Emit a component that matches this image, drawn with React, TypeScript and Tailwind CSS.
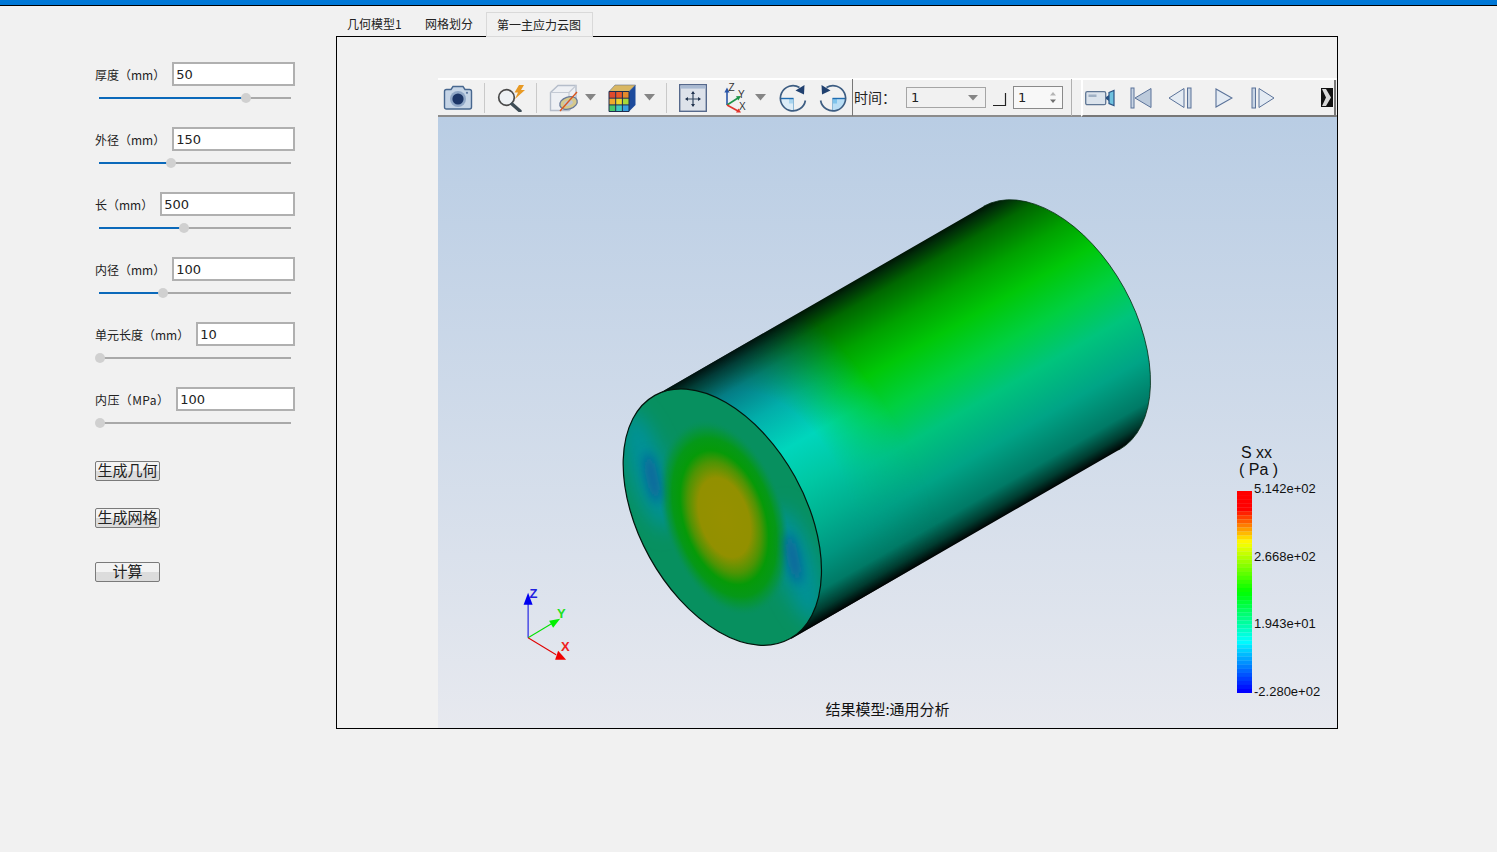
import React from "react";

const fields = [
  { label: "厚度（mm）", value: "50", pos: 147, tracking: "" },
  { label: "外径（mm）", value: "150", pos: 72, tracking: "" },
  { label: "长（mm）", value: "500", pos: 85, tracking: "" },
  { label: "内径（mm）", value: "100", pos: 63.5, tracking: "" },
  { label: "单元长度（mm）", value: "10", pos: 1, tracking: "" },
  { label: "内压（MPa）", value: "100", pos: 1, tracking: "tracking-[0.4px]" },
];

function Field({ label, value, pos, tracking }: { label: string; value: string; pos: number; tracking: string }) {
  return (
    <div className="h-[65px]">
      <div className="flex items-center h-6">
        <span className={"text-[12px] text-[#222] whitespace-nowrap pt-[1px] " + tracking}>{label}</span>
        <div className="flex items-center h-6 border-2 border-[#b0b0b0] bg-white pl-[2px] text-[13px] font-['DejaVu_Sans',sans-serif] text-[#222] leading-none ml-[7px] flex-1 min-w-0">
          {value}
        </div>
      </div>
      <div className="relative h-[2px] mt-[11px] ml-1 mr-1 bg-[#a9a9a9]">
        <div className="h-full bg-[#0b69ba]" style={{ width: pos }} />
        <div
          className="absolute top-[-4px] w-[10px] h-[10px] rounded-full bg-[#d0d0d0] -translate-x-1/2"
          style={{ left: pos }}
        />
      </div>
    </div>
  );
}

function Btn({ children, className }: { children: React.ReactNode; className: string }) {
  return (
    <div
      className={
        "w-[65px] h-5 border border-[#7a7a7a] rounded-[2px] flex items-center justify-center pb-[3px] text-[15px] leading-none text-[#222] bg-linear-to-b from-[#f3f3f3] from-50% to-[#dcdcdc] to-50% " +
        className
      }
    >
      {children}
    </div>
  );
}

const Sep = ({ className }: { className: string }) => <div className={"w-px h-[30px] bg-[#c9c9c9] shrink-0 " + className} />;

const Caret = ({ className }: { className: string }) => (
  <svg width="11" height="7" viewBox="0 0 11 7" className={"shrink-0 " + className}>
    <path d="M0 0H11L5.5 6.5Z" fill="#858585" />
  </svg>
);

const IconCamera = () => (
  <svg width="30" height="26" viewBox="0 0 30 26" className="shrink-0">
    <path d="M1.5 6.5Q1.5 4.5 3.5 4.5H8L10 1.5H20L22 4.5H26.5Q28.5 4.5 28.5 6.5V22Q28.5 24 26.5 24H3.5Q1.5 24 1.5 22Z" fill="#c5d4e6" stroke="#47678f" strokeWidth="1.4" />
    <circle cx="15" cy="14" r="8" fill="#8fa6c6" />
    <circle cx="15" cy="14" r="5.6" fill="#1c3567" />
    <circle cx="24" cy="7.8" r="1.1" fill="#5b77a0" />
  </svg>
);

const IconZap = () => (
  <svg width="30" height="28" viewBox="0 0 30 28" className="shrink-0">
    <circle cx="10.5" cy="13.5" r="7.8" fill="#eef2f5" stroke="#4a4a4a" strokeWidth="1.7" />
    <path d="M16 20L24 27" stroke="#3d4c55" strokeWidth="3.4" strokeLinecap="round" />
    <path d="M23 1L28 1L25 6L29 6L19 15L22 8.5L18.5 8.5Z" fill="#e89a25" />
  </svg>
);

const IconCube = () => (
  <svg width="30" height="30" viewBox="0 0 30 30" className="shrink-0">
    <path d="M1.5 9.5L9 2.5H27V20L20 27.5H1.5Z" fill="#eef0f4" stroke="#b5bdca" strokeWidth="1.4" />
    <path d="M1.5 9.5H20V27.5M20 9.5L27 2.5" fill="none" stroke="#c4cad4" strokeWidth="1.2" />
    <ellipse cx="19.5" cy="20" rx="9" ry="6" fill="#d6c98c" stroke="#66789a" strokeWidth="1.3" transform="rotate(-18 19.5 20)" />
    <ellipse cx="19.5" cy="20" rx="4.5" ry="2.6" fill="#bfc6d2" transform="rotate(-18 19.5 20)" />
    <path d="M11 28L28 9" stroke="#d9561f" strokeWidth="1.4" />
  </svg>
);

const IconColorCube = () => (
  <svg width="29" height="28" viewBox="0 0 29 28" className="shrink-0">
    <path d="M7 1H27.5L21 7.5H1Z" fill="#d9b763" stroke="#64748b" strokeWidth=".6" />
    <path d="M21 7.5L27.5 1V21L21 27.5Z" fill="#1d4b9c" />
    <rect x="1" y="7.5" width="6.7" height="6.7" fill="#e14a2c" />
    <rect x="7.7" y="7.5" width="6.7" height="6.7" fill="#e9592a" />
    <rect x="14.4" y="7.5" width="6.6" height="6.7" fill="#e48a2c" />
    <rect x="1" y="14.2" width="6.7" height="6.7" fill="#f0a92c" />
    <rect x="7.7" y="14.2" width="6.7" height="6.7" fill="#ecd52c" />
    <rect x="14.4" y="14.2" width="6.6" height="6.7" fill="#a7d73a" />
    <rect x="1" y="20.9" width="6.7" height="6.6" fill="#49c86a" />
    <rect x="7.7" y="20.9" width="6.7" height="6.6" fill="#40c8c0" />
    <rect x="14.4" y="20.9" width="6.6" height="6.6" fill="#3a9ee0" />
    <path d="M1 7.5H21V27.5H1ZM7.7 7.5V27.5M14.4 7.5V27.5M1 14.2H21M1 20.9H21" fill="none" stroke="#1e2c4e" strokeWidth="1" />
  </svg>
);

const IconFit = () => (
  <svg width="28" height="28" viewBox="0 0 28 28" className="shrink-0">
    <rect x=".7" y=".7" width="26.6" height="26.6" fill="#dde2ea" stroke="#56698c" strokeWidth="1.4" />
    <rect x="1.4" y="1.4" width="25.2" height="3.2" fill="#a9bad2" />
    <path d="M14 8V22M7 15H21" stroke="#33465f" strokeWidth="1.2" />
    <path d="M14 7L16 10H12ZM14 23L16 20H12ZM6 15L9 13V17ZM22 15L19 13V17Z" fill="#22344f" />
  </svg>
);

const IconAxis = () => (
  <svg width="25" height="30" viewBox="0 0 25 30" className="shrink-0">
    <path d="M6 22V8" stroke="#2a55a8" strokeWidth="1.6" />
    <path d="M6 4.5L8.6 9.5H3.4Z" fill="#2a55a8" />
    <path d="M6 22L17 15" stroke="#1e9448" strokeWidth="1.6" />
    <path d="M20 13L15 13.2L17.4 17.4Z" fill="#1e9448" />
    <path d="M6 22L17 28" stroke="#e0342c" strokeWidth="1.6" />
    <path d="M20 29.5L15 29.6L17.5 25.4Z" fill="#e0342c" />
    <text x="7.5" y="8" fontSize="10" fill="#333" fontFamily="Liberation Sans">Z</text>
    <text x="17" y="15" fontSize="10" fill="#333" fontFamily="Liberation Sans">Y</text>
    <text x="18" y="27" fontSize="10" fill="#333" fontFamily="Liberation Sans">X</text>
  </svg>
);

const IconRotate = ({ flip }: { flip?: boolean }) => (
  <svg width="28" height="28" viewBox="0 0 28 28" className="shrink-0" style={flip ? { transform: "scaleX(-1)" } : undefined}>
    <path d="M1.5 14.5H14.5V26.5A12.6 12.6 0 0 1 1.5 14.5Z" fill={flip ? "#b9def5" : "#dcecf7"} />
    <rect x="10" y="14.5" width="4.5" height="5" fill={flip ? "#7fc4ec" : "#a9d4ee"} />
    <path d="M14.5 14.5V26.5" stroke="#8cb8d6" strokeWidth="1" />
    <path d="M1.5 14.5H14.5" stroke="#1f6cb0" strokeWidth="1.4" />
    <path d="M20.5 3.5A12.6 12.6 0 1 0 26.4 16.5" fill="none" stroke="#3d5d82" strokeWidth="1.7" />
    <path d="M25.5 1L25 10.5L16.5 6.5Z" fill="#20406f" />
  </svg>
);

const IconVideo = () => (
  <svg width="30" height="18" viewBox="0 0 30 18" className="shrink-0">
    <rect x=".7" y="2.7" width="20" height="13" rx="1.5" fill="#dbe3ec" stroke="#5f7694" strokeWidth="1.3" />
    <rect x="3.5" y="5.5" width="8" height="2.5" fill="#9fb0c4" />
    <path d="M21 8L24 6V12L21 10Z" fill="#274f80" />
    <path d="M24 3.5L29 1.5V16.5L24 14.5Z" fill="#6fc2df" stroke="#2c5486" strokeWidth="1.2" />
  </svg>
);

const Prev = () => (
  <svg width="22" height="22" viewBox="0 0 22 22" className="shrink-0">
    <rect x="1" y="1" width="3" height="20" fill="#c9d5e4" stroke="#5a7299" strokeWidth="1" />
    <path d="M21 1.5V20.5L5 11Z" fill="#bccadb" stroke="#5a7299" strokeWidth="1" />
  </svg>
);
const Back = () => (
  <svg width="24" height="22" viewBox="0 0 24 22" className="shrink-0">
    <path d="M16 1.5V20.5L1 11Z" fill="#e4ebf3" stroke="#5a7299" strokeWidth="1" />
    <rect x="19.5" y="1" width="3.5" height="20" fill="#c9d5e4" stroke="#5a7299" strokeWidth="1" />
  </svg>
);
const Play = () => (
  <svg width="18" height="22" viewBox="0 0 18 22" className="shrink-0">
    <path d="M1 2V20L17 11Z" fill="#e4ebf3" stroke="#5a7299" strokeWidth="1.1" />
  </svg>
);
const Forward = () => (
  <svg width="24" height="22" viewBox="0 0 24 22" className="shrink-0">
    <rect x="1" y="1" width="3.5" height="20" fill="#c9d5e4" stroke="#5a7299" strokeWidth="1" />
    <path d="M8 1.5V20.5L23 11Z" fill="#e4ebf3" stroke="#5a7299" strokeWidth="1" />
  </svg>
);

function bandColor(t: number) {
  const s = (a: number, b: number, k: number) => Math.round(a + (b - a) * k);
  if (t < 0.08) return "rgb(255,0,0)";
  if (t < 0.25) { const k = (t - 0.08) / 0.17; return `rgb(255,${s(0, 255, k)},0)`; }
  if (t < 0.5) { const k = (t - 0.25) / 0.25; return `rgb(${s(255, 0, k)},255,0)`; }
  if (t < 0.75) { const k = (t - 0.5) / 0.25; return `rgb(0,255,${s(0, 255, k)})`; }
  const k = (t - 0.75) / 0.25;
  return `rgb(0,${s(255, 0, k)},255)`;
}

const bands = Array.from({ length: 50 }, (_, i) => i);

function ColorBar() {
  return (
    <svg width="15" height="202" viewBox="0 0 15 202" className="shrink-0 mt-[10px]">
      {bands.map((i) => (
        <rect key={i} x="0" y={i * 4.04} width="15" height="4.2" fill={bandColor(i / 49)} />
      ))}
    </svg>
  );
}

const BODY = "M656 394.5L983 206A139 83 61 0 1 1118 449.5L791 638Z";

function Cylinder() {
  return (
    <svg className="absolute inset-0 w-full h-full" viewBox="438 117 898 610">
      <defs>
        <linearGradient id="backShade" gradientUnits="userSpaceOnUse" x1="656" y1="394.5" x2="795" y2="636">
          <stop offset="0" stopColor="#001505" />
          <stop offset=".02" stopColor="#002c08" />
          <stop offset=".08" stopColor="#006800" />
          <stop offset=".2" stopColor="#00a200" />
          <stop offset=".32" stopColor="#00c808" />
          <stop offset=".46" stopColor="#00d040" />
          <stop offset=".6" stopColor="#00c47c" />
          <stop offset=".76" stopColor="#00a486" />
          <stop offset=".9" stopColor="#007a66" />
          <stop offset=".96" stopColor="#003c30" />
          <stop offset="1" stopColor="#000" />
        </linearGradient>
        <linearGradient id="frontShade" gradientUnits="userSpaceOnUse" x1="656" y1="394.5" x2="795" y2="636">
          <stop offset="0" stopColor="#001015" />
          <stop offset=".04" stopColor="#023c46" />
          <stop offset=".12" stopColor="#047c86" />
          <stop offset=".25" stopColor="#02aeaa" />
          <stop offset=".4" stopColor="#00d6bc" />
          <stop offset=".54" stopColor="#00c8a4" />
          <stop offset=".68" stopColor="#00b090" />
          <stop offset=".8" stopColor="#009680" />
          <stop offset=".9" stopColor="#007a66" />
          <stop offset=".96" stopColor="#003c30" />
          <stop offset="1" stopColor="#000" />
        </linearGradient>
        <radialGradient id="frontMaskGrad" gradientUnits="userSpaceOnUse" cx="0" cy="0" r="1" gradientTransform="translate(780 490) rotate(-30) scale(135 240)">
          <stop offset="0" stopColor="#fff" />
          <stop offset=".45" stopColor="#fff" />
          <stop offset="1" stopColor="#000" />
        </radialGradient>
        <mask id="frontMask" maskUnits="userSpaceOnUse" x="438" y="117" width="898" height="610">
          <rect x="438" y="117" width="898" height="610" fill="url(#frontMaskGrad)" />
        </mask>
        <radialGradient id="core">
          <stop offset="0" stopColor="#969000" />
          <stop offset=".4" stopColor="#929000" />
          <stop offset=".56" stopColor="#4e9404" />
          <stop offset=".68" stopColor="#069a08" />
          <stop offset=".8" stopColor="#059818" />
          <stop offset=".9" stopColor="#06943f" stopOpacity=".8" />
          <stop offset="1" stopColor="#07905f" stopOpacity="0" />
        </radialGradient>
        <filter id="blur5" x="-100%" y="-100%" width="300%" height="300%"><feGaussianBlur stdDeviation="5.5" /></filter>
        <filter id="blur9" x="-100%" y="-100%" width="300%" height="300%"><feGaussianBlur stdDeviation="10" /></filter>
        <clipPath id="faceClip">
          <ellipse cx="722" cy="516.5" rx="139" ry="83" transform="rotate(61 722 516.5)" />
        </clipPath>
      </defs>

      <path d={BODY} fill="url(#backShade)" />
      <path d={BODY} fill="url(#frontShade)" mask="url(#frontMask)" />
      <path d="M983 206A139 83 61 0 1 1118 449.5" fill="none" stroke="#062b12" strokeWidth=".8" />

      <ellipse cx="722" cy="516.5" rx="139" ry="83" transform="rotate(61 722 516.5)" fill="#07905f" />
      <g clipPath="url(#faceClip)">
        <ellipse cx="648" cy="470" rx="18" ry="62" fill="#06929a" filter="url(#blur9)" transform="rotate(-18 648 470)" />
        <ellipse cx="797" cy="565" rx="18" ry="60" fill="#06929a" filter="url(#blur9)" transform="rotate(-18 797 565)" />
        <ellipse cx="724" cy="517" rx="102" ry="60" fill="url(#core)" transform="rotate(72 724 517)" />
        <ellipse cx="652" cy="477" rx="6" ry="26" fill="#08609f" filter="url(#blur5)" transform="rotate(-12 652 477)" />
        <ellipse cx="793" cy="558" rx="6" ry="26" fill="#08609f" filter="url(#blur5)" transform="rotate(-12 793 558)" />
      </g>
      <ellipse cx="722" cy="516.5" rx="139" ry="83" transform="rotate(61 722 516.5)" fill="none" stroke="#04140c" strokeWidth="1.2" />

      <g fontFamily="Liberation Sans" fontWeight="700" fontSize="13">
        <path d="M528 637V600" stroke="#0000e0" strokeWidth="1" />
        <path d="M528 592L532.5 604H523.5Z" fill="#0000f0" />
        <text x="529.5" y="597" fill="#2020e0">Z</text>
        <path d="M528 637L553 622" stroke="#00e000" strokeWidth="1" />
        <path d="M560 618L553 627L549 620Z" fill="#00f000" />
        <text x="557" y="617" fill="#20e020">Y</text>
        <path d="M528 637L556 654" stroke="#e00000" strokeWidth="1" />
        <path d="M566 659L555 659L558 650Z" fill="#f00000" />
        <text x="561" y="650" fill="#f02020">X</text>
      </g>
    </svg>
  );
}

export default function App() {
  return (
    <div className="w-[1497px] h-[852px] overflow-hidden bg-[#f1f1f1] font-['Noto_Sans_CJK_SC','Noto_Sans',sans-serif] text-[#222]">
      <div className="h-[6px] bg-[#0078d7] border-b border-black" />
      <div className="flex">
        <div className="w-[200px] ml-[95px] pt-[56px] shrink-0">
          {fields.map((f) => (
            <Field key={f.label} {...f} />
          ))}
          <Btn className="mt-[9px]">生成几何</Btn>
          <Btn className="mt-[27px]">生成网格</Btn>
          <Btn className="mt-[34px]">计算</Btn>
        </div>

        <div className="ml-[41px] pt-[6px] w-[1002px] shrink-0">
          <div className="flex h-[25px] text-[12px] relative z-10 -mb-px">
            <div className="w-[74px] pl-[11px] pt-[3px] leading-[17px]">几何模型1</div>
            <div className="w-[76px] pl-[15px] pt-[3px] leading-[17px]">网格划分</div>
            <div className="w-[107px] pl-[10px] pt-[3px] leading-[17px] border border-[#d9d9d9] bg-[#f1f1f1]">第一主应力云图</div>
          </div>
          <div className="h-[693px] border border-black pl-[101px] pt-[41px] flex flex-col">
            <div className="h-[39px] flex items-center pl-[5px] border-t-2 border-white border-b-2 border-b-[#8c8c8c] shrink-0 bg-[#f1f1f1] relative">
              <IconCamera />
              <Sep className="ml-[11px]" />
              <div className="ml-[11px]"><IconZap /></div>
              <Sep className="ml-[10px]" />
              <div className="ml-[12px]"><IconCube /></div>
              <Caret className="ml-[6px]" />
              <div className="ml-[12px]"><IconColorCube /></div>
              <Caret className="ml-[7px]" />
              <Sep className="ml-[11px]" />
              <div className="ml-[12px]"><IconFit /></div>
              <div className="ml-[14px]"><IconAxis /></div>
              <Caret className="ml-[9px]" />
              <div className="ml-[13px]"><IconRotate /></div>
              <div className="ml-[12px]"><IconRotate flip /></div>
              <div className="w-px h-[37px] bg-[#777] ml-[5px] shrink-0" />
              <div className="ml-[1px] w-[52px] text-[14px] whitespace-nowrap shrink-0">时间：</div>
              <div className="w-[80px] h-[21px] border border-[#a5a5a5] flex items-center justify-between px-[4px] text-[13px] font-['DejaVu_Sans',sans-serif] shrink-0">
                <span>1</span>
                <svg width="10" height="6" viewBox="0 0 10 6" className="mr-[3px]"><path d="M0 0H10L5 5.5Z" fill="#858585" /></svg>
              </div>
              <svg width="14" height="13" viewBox="0 0 14 13" className="ml-[7px] mt-[3px] shrink-0"><path d="M0 12.5H12.5V0" fill="none" stroke="#222" strokeWidth="1.2" /></svg>
              <div className="ml-[6px] w-[50px] h-[23px] border border-[#8a8a8a] bg-[#f8f8f8] flex items-center justify-between pl-[4px] pr-[5px] text-[13px] font-['DejaVu_Sans',sans-serif] shrink-0">
                <span>1</span>
                <svg width="8" height="13" viewBox="0 0 8 13"><path d="M4 1L7 4.5H1Z" fill="#b5b5b5" /><path d="M4 12L7 8.5H1Z" fill="#707070" /></svg>
              </div>
              <div className="w-px h-[37px] bg-[#b0b0b0] ml-[8px] shrink-0" />
              <div className="ml-[9px] flex-1 self-stretch flex items-center border-l-2 border-l-white border-r-2 border-r-[#777] border-b-2 border-b-[#777] -mb-[2px] mr-px pl-[2px]">
                <IconVideo />
                <div className="ml-[15px]"><Prev /></div>
                <div className="ml-[16px]"><Back /></div>
                <div className="ml-[23px]"><Play /></div>
                <div className="ml-[18px]"><Forward /></div>
                <svg width="12" height="19" viewBox="0 0 12 19" className="ml-auto mr-[1px] shrink-0">
                  <rect width="12" height="19" fill="#111" />
                  <path d="M1 1H5L10 9.5L5 18H1L5 9.5Z" fill="#d8d8d8" />
                </svg>
              </div>
            </div>
            <div className="relative flex-1 overflow-hidden bg-linear-to-b from-[#b9cde4] to-[#e7e9ef]">
              <Cylinder />
              <div className="absolute left-[799px] top-[327px] font-['Liberation_Sans',sans-serif] text-[#111]">
                <div className="pl-[4px] text-[16px] leading-[17px]">S xx</div>
                <div className="pl-[2px] text-[16px] leading-[17px]">( Pa )</div>
                <div className="flex mt-[3px]">
                  <ColorBar />
                  <div className="ml-[2px] h-[219px] flex flex-col justify-between text-[13px] leading-4 whitespace-nowrap">
                    <span>5.142e+02</span>
                    <span>2.668e+02</span>
                    <span>1.943e+01</span>
                    <span>-2.280e+02</span>
                  </div>
                </div>
              </div>
              <div className="absolute inset-x-0 bottom-[9px] text-center text-[15px] leading-5 text-[#111]">结果模型:通用分析</div>
            </div>
          </div>
        </div>
      </div>
    </div>
  );
}
